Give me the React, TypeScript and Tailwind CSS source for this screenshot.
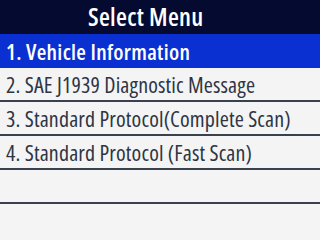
const items = [
  "1. Vehicle Information",
  "2. SAE J1939 Diagnostic Message",
  "3. Standard Protocol(Complete Scan)",
  "4. Standard Protocol (Fast Scan)",
  "",
];

export default function App() {
  return (
    <div
      className="flex h-[240px] w-[320px] flex-col overflow-hidden bg-[#f4f4f4]"
      style={{ fontFamily: '"Open Sans", sans-serif', fontStretch: "semi-condensed" }}
    >
      <div className="flex h-[34px] shrink-0 items-center bg-[#050b30] pl-[88px] text-[25px] font-semibold tracking-[0.3px] text-white">
        Select Menu
      </div>
      {items.map((label, i) => (
        <div
          key={i}
          className={
            i === 0
              ? "flex h-[34px] shrink-0 items-center bg-[#0a30d2] pl-[6px] text-[22px] font-semibold tracking-[0.3px] whitespace-nowrap text-white"
              : "flex h-[34px] shrink-0 items-center border-b-2 border-[#3a414e] pl-[6px] text-[22px] font-medium tracking-[0.15px] whitespace-nowrap text-[#2e3544]"
          }
        >
          {label}
        </div>
      ))}
    </div>
  );
}
